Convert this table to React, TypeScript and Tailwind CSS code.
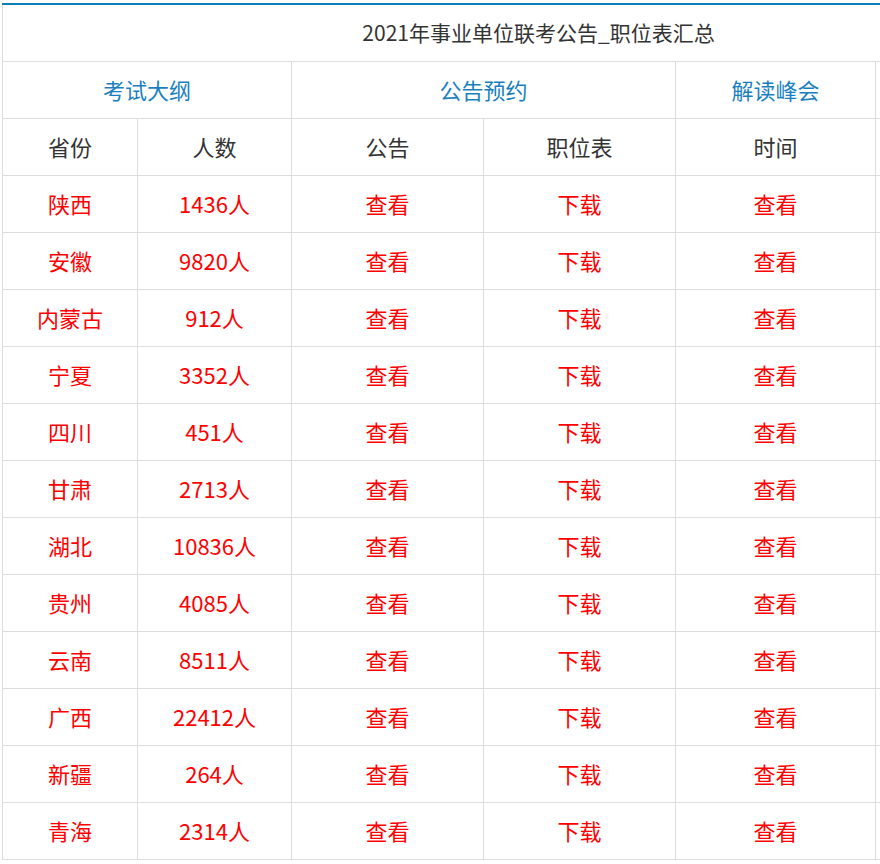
import React from 'react'

const rows = [
  ['陕西', '1436人'],
  ['安徽', '9820人'],
  ['内蒙古', '912人'],
  ['宁夏', '3352人'],
  ['四川', '451人'],
  ['甘肃', '2713人'],
  ['湖北', '10836人'],
  ['贵州', '4085人'],
  ['云南', '8511人'],
  ['广西', '22412人'],
  ['新疆', '264人'],
  ['青海', '2314人'],
]

const cell = 'h-[57px] border border-[#ddd] text-center align-middle p-0'

export default function App() {
  return (
    <div
      className="w-full overflow-hidden bg-white pt-[3px] pl-[2px]"
      style={{ fontFamily: '"Noto Sans CJK SC", "Open Sans", sans-serif' }}
    >
      <table className="w-[1072px] table-fixed border-collapse text-[22px] border-t-2 border-t-[#0a7dbf]">
        <colgroup>
          <col className="w-[135px]" />
          <col className="w-[154px]" />
          <col className="w-[192px]" />
          <col className="w-[192px]" />
          <col className="w-[200px]" />
          <col className="w-[199px]" />
        </colgroup>
        <tbody>
          <tr>
            <td colSpan={6} className={`${cell} border-t-2 border-t-[#0a7dbf] text-[21px] text-[#333]`}>
              2021年事业单位联考公告_职位表汇总
            </td>
          </tr>
          <tr className="text-[#1a7fc0]">
            <td colSpan={2} className={cell}>考试大纲</td>
            <td colSpan={2} className={cell}>公告预约</td>
            <td className={cell}>解读峰会</td>
            <td className={cell}>考试大纲</td>
          </tr>
          <tr className="text-[#333]">
            <td className={cell}>省份</td>
            <td className={cell}>人数</td>
            <td className={cell}>公告</td>
            <td className={cell}>职位表</td>
            <td className={cell}>时间</td>
            <td className={cell}>备考</td>
          </tr>
          {rows.map(([p, n]) => (
            <tr key={p} className="text-[#ff0000]">
              <td className={cell}>{p}</td>
              <td className={cell}>{n}</td>
              <td className={cell}>查看</td>
              <td className={cell}>下载</td>
              <td className={cell}>查看</td>
              <td className={cell}>查看</td>
            </tr>
          ))}
        </tbody>
      </table>
    </div>
  )
}
